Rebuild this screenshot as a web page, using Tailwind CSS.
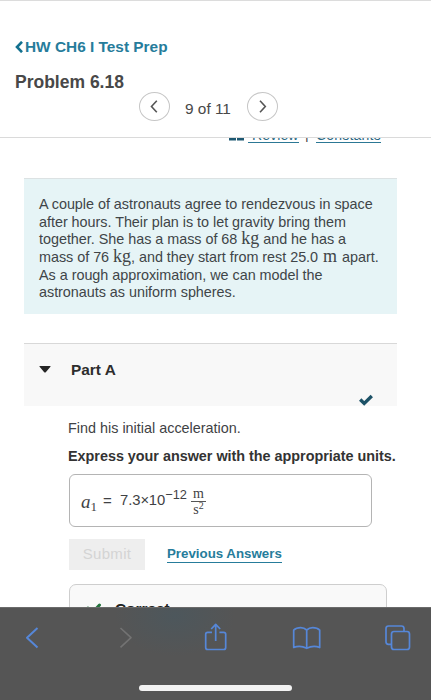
<!DOCTYPE html>
<html lang="en">
<head>
<meta charset="utf-8">
<meta name="viewport" content="width=device-width">
<title>Problem 6.18</title>
<script src="https://cdn.jsdelivr.net/npm/@tailwindcss/browser@4"></script>
</head>
<body class="bg-white">
<div class="flex h-[700px] w-[431px] flex-col overflow-hidden bg-white font-['Liberation_Sans',sans-serif] text-[#3f4245]">
  <header class="h-[138px] shrink-0 border-t border-b border-t-[#dcdcdc] border-b-[#dadada] pl-[15px]">
    <a class="mt-[36px] flex h-[20px] items-center text-[15.4px] leading-[20px] font-bold whitespace-nowrap text-[#267c9b]">
      <svg class="mr-[2px] h-[12px] w-[8px]" viewBox="0 0 8 12" fill="none" stroke="#13718f" stroke-width="2.6"><path d="M7 .8 2 6l5 5.200"/></svg>
      <span>HW CH6 I Test Prep</span>
    </a>
    <h1 class="mt-[15px] h-[20px] text-[17.5px] leading-[20px] font-bold whitespace-nowrap text-[#484848]">Problem 6.18</h1>
    <nav class="ml-[124px] flex h-[29px] items-center">
      <button class="flex h-[29px] w-[31px] items-center justify-center rounded-[50%] border border-[#c6c6c6]">
        <svg class="h-[13px] w-[9px]" viewBox="0 0 9 13" fill="none" stroke="#555" stroke-width="1.6"><path d="M6.800 .8 1.500 6.500l5.300 5.700"/></svg>
      </button>
      <span class="mt-[4px] ml-[15px] w-[48px] text-[15.4px] whitespace-nowrap text-[#484848]">9 of 11</span>
      <button class="ml-[14px] flex h-[29px] w-[31px] items-center justify-center rounded-[50%] border border-[#c6c6c6]">
        <svg class="h-[13px] w-[9px]" viewBox="0 0 9 13" fill="none" stroke="#555" stroke-width="1.600"><path d="m2 .8 5.300 5.700L2 12.200"/></svg>
      </button>
    </nav>
  </header>
  <main class="flex h-[469px] shrink-0 flex-col overflow-hidden">
    <div class="ml-[229px] flex h-[5px] shrink-0 items-end overflow-hidden text-[14px] leading-[16px] text-[#2c6883]">
      <svg class="mb-[2px] h-[3px] w-[15px] shrink-0" viewBox="0 0 15 3" fill="#1d5872"><path d="M0 0h7v2.500H0zM8 0h7v2.500H8z"/></svg>
      <a class="ml-[4px] h-[16px] w-[51px] shrink-0 border-b border-[#2c7895] pl-[4px] leading-[16px] tracking-[.1px] whitespace-nowrap">Review</a>
      <span class="ml-[6px] h-[15px] w-[11px] shrink-0 leading-[12px] text-[#444]">|</span>
      <a class="h-[16px] w-[65px] shrink-0 border-b border-[#2c7895] leading-[16px] tracking-[.2px] whitespace-nowrap">Constants</a>
    </div>
    <section class="mt-[35px] ml-[24px] h-[136px] w-[373px] shrink-0 border-t border-[#dce2e3] bg-[#e6f4f6] pt-[17px] pl-[15px] text-[14.4px] leading-[17.7px] tracking-[-.03px] whitespace-nowrap text-[#404548]">
      <p class="h-[17.7px]">A couple of astronauts agree to rendezvous in space</p>
      <p class="h-[17.7px]">after hours. Their plan is to let gravity bring them</p>
      <p class="h-[17.7px]">together. She has a mass of 68 <span class="font-['Liberation_Serif',serif] text-[18px] leading-[0]">kg</span> and he has a</p>
      <p class="h-[17.7px]">mass of 76 <span class="font-['Liberation_Serif',serif] text-[18px] leading-[0]">kg</span>, and they start from rest 25.0 <span class="mr-px ml-px font-['Liberation_Serif',serif] text-[18px] leading-[0]">m</span> apart.</p>
      <p class="h-[17.7px]">As a rough approximation, we can model the</p>
      <p class="h-[17.7px]">astronauts as uniform spheres.</p>
    </section>
    <section class="mt-[29px] ml-[24px] flex h-[63px] w-[373px] shrink-0 border-t border-[#d8d8d8] bg-[#f8f8f8]">
      <svg class="mt-[22px] ml-[15px] h-[7px] w-[12px]" viewBox="0 0 12 7"><path d="M.8 0h10.400q.8 0 .2.700L7 6Q6 7 5 6L.6.700Q0 0 .8 0z" fill="#252525"/></svg>
      <h2 class="mt-[16px] ml-[20px] text-[15.4px] leading-[20px] font-bold text-[#2d2d2d]">Part A</h2>
      <svg class="mt-[50px] mr-[24px] ml-auto h-[12px] w-[14px]" viewBox="0 0 14 12" fill="none" stroke="#1d5267" stroke-width="3.300"><path d="m1.200 5.500 4 4L12.800 2"/></svg>
    </section>
    <section class="ml-[68px] flex shrink-0 flex-col">
      <p class="mt-[12px] h-[20px] text-[14.4px] leading-[20px] whitespace-nowrap">Find his initial acceleration.</p>
      <p class="mt-[8px] h-[20px] text-[14.4px] leading-[20px] font-bold tracking-[-.02px] whitespace-nowrap text-[#333]">Express your answer with the appropriate units.</p>
      <div class="mt-[8px] ml-px flex h-[53px] w-[303px] items-center rounded-[6px] border border-[#b4b4b4] pl-[11px] text-[15px]">
        <span class="w-[16px] pt-[2px] font-['Liberation_Serif',serif] text-[19px] leading-[20px] whitespace-nowrap"><i>a</i><sub class="text-[13px]">1</sub></span>
        <span class="ml-[6px] w-[17px] pt-[2px]">=</span>
        <span class="w-[66px] text-[14.8px] whitespace-nowrap">7.3<span class="tracking-[-.5px]">×</span>10<sup class="text-[12.8px]">−12</sup></span>
        <span class="ml-[5px] flex w-[15px] flex-col items-center pt-px font-['Liberation_Serif',serif] text-[14px] leading-[14px]">
          <span class="h-[14px]">m</span>
          <span class="h-[15px] w-[15px] border-t border-[#555] pt-px text-center whitespace-nowrap">s<sup class="text-[10px] leading-none">2</sup></span>
        </span>
      </div>
      <div class="mt-[12px] ml-px flex h-[31px] items-center">
        <button class="h-[31px] w-[76px] bg-[#eeeeee] text-[15px] tracking-[.3px] text-[#d4d4d4]">Submit</button>
        <a class="ml-[22px] h-[16px] w-[115px] border-b border-[#267c9b] text-[13.3px] leading-[13px] font-bold whitespace-nowrap text-[#267c9b]">Previous Answers</a>
      </div>
      <div class="mt-[14px] ml-px flex h-[60px] w-[318px] rounded-t-[7px] border border-[#cecece] bg-[#f9f9f9]">
        <svg class="mt-[17px] ml-[16px] h-[14px] w-[17px]" viewBox="0 0 17 14" fill="none" stroke="#24743d" stroke-width="3" stroke-linecap="round"><path d="m2 6 4 5 7.500-8"/></svg>
        <b class="mt-[14px] ml-[12px] text-[15.4px] leading-[20px] text-[#222]">Correct</b>
      </div>
    </section>
  </main>
  <footer class="flex h-[93px] shrink-0 flex-col border-t border-[#6b6b6b] bg-[#555555] bg-[radial-gradient(ellipse_60px_40px_at_175px_8px,#4d575c_0%,#555555_100%)]">
    <div class="flex h-[60px]">
      <svg class="h-[60px] w-[431px]" viewBox="0 608 431 60" fill="none" stroke="#5687d8" stroke-width="1.700" stroke-linejoin="round">
        <path d="m37.500 628-10.500 9.700 10.500 9.700" stroke-width="2"/>
        <path d="m120.500 628 10.500 9.700-10.500 9.700" stroke="#737373" stroke-width="1.600"/>
        <path d="M212 632.300h-4.300q-2 0-2 2V647.500q0 2 2 2h16q2 0 2-2v-13.200q0-2-2-2h-4.300M215.700 641v-16.500m-4.500 4.500 4.500-4.600 4.500 4.600"/>
        <path d="M306.700 630q-2.500-2.300-6-2.300-4.500 0-7 2.500V647.500q6.500-2.500 13 .8 6.500-3.300 13-.8V630.200q-2.500-2.500-7-2.500-3.500 0-6 2.300zV648"/>
        <path d="M391.300 644.300H388.500q-2.500 0-2.500-2.500V628.500q0-2.500 2.500-2.500h13q2.500 0 2.500 2.500v2.800"/>
        <rect x="391.500" y="631.500" width="18" height="18" rx="2.500"/>
      </svg>
    </div>
    <div class="mx-auto mt-[17px] h-[6px] w-[153px] rounded-full bg-[#f2f2f2]"></div>
  </footer>
</div>
</body>
</html>
